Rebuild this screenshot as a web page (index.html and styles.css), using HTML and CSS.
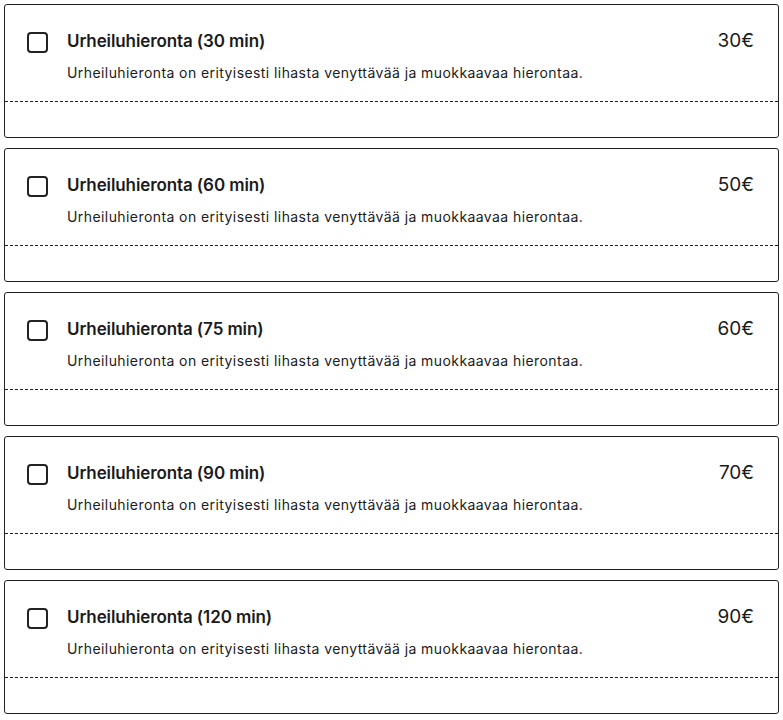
FILE: index.html
```html
<!DOCTYPE html>
<html lang="fi">
<head>
<meta charset="utf-8">
<title>Palvelut</title>
<link rel="stylesheet" href="styles.css">
</head>
<body>
<ul class="services">
  <li class="card">
    <div class="card-main">
      <span class="checkbox"></span>
      <div class="info">
        <div class="title-row">
          <h3 class="title">Urheiluhieronta (30 min)</h3>
          <span class="price">30€</span>
        </div>
        <p class="desc">Urheiluhieronta on erityisesti lihasta venyttävää ja muokkaavaa hierontaa.</p>
      </div>
    </div>
    <div class="card-foot"></div>
  </li>
  <li class="card">
    <div class="card-main">
      <span class="checkbox"></span>
      <div class="info">
        <div class="title-row">
          <h3 class="title">Urheiluhieronta (60 min)</h3>
          <span class="price">50€</span>
        </div>
        <p class="desc">Urheiluhieronta on erityisesti lihasta venyttävää ja muokkaavaa hierontaa.</p>
      </div>
    </div>
    <div class="card-foot"></div>
  </li>
  <li class="card">
    <div class="card-main">
      <span class="checkbox"></span>
      <div class="info">
        <div class="title-row">
          <h3 class="title">Urheiluhieronta (75 min)</h3>
          <span class="price">60€</span>
        </div>
        <p class="desc">Urheiluhieronta on erityisesti lihasta venyttävää ja muokkaavaa hierontaa.</p>
      </div>
    </div>
    <div class="card-foot"></div>
  </li>
  <li class="card">
    <div class="card-main">
      <span class="checkbox"></span>
      <div class="info">
        <div class="title-row">
          <h3 class="title">Urheiluhieronta (90 min)</h3>
          <span class="price">70€</span>
        </div>
        <p class="desc">Urheiluhieronta on erityisesti lihasta venyttävää ja muokkaavaa hierontaa.</p>
      </div>
    </div>
    <div class="card-foot"></div>
  </li>
  <li class="card">
    <div class="card-main">
      <span class="checkbox"></span>
      <div class="info">
        <div class="title-row">
          <h3 class="title">Urheiluhieronta (120 min)</h3>
          <span class="price">90€</span>
        </div>
        <p class="desc">Urheiluhieronta on erityisesti lihasta venyttävää ja muokkaavaa hierontaa.</p>
      </div>
    </div>
    <div class="card-foot"></div>
  </li>
</ul>
</body>
</html>
```
FILE: styles.css
```css
* { box-sizing: border-box; }
html, body { margin: 0; padding: 0; background: #fff; }
body {
  font-family: "Inter", "Noto Sans", "Liberation Sans", sans-serif;
  color: #1b1b1b;
}
.services {
  list-style: none;
  margin: 0;
  padding: 4px 4px 0 4px;
  display: flex;
  flex-direction: column;
  gap: 10px;
}
.card {
  border: 1px solid #222;
  border-radius: 3px;
  height: 134px;
  display: flex;
  flex-direction: column;
}
.card-main {
  flex: 1;
  display: flex;
  align-items: flex-start;
  gap: 19px;
  padding: 25px 24px 0 22px;
  border-bottom: 1px dashed #222;
}
.checkbox {
  flex: none;
  width: 21px;
  height: 21px;
  margin-top: 2px;
  border: 2px solid #222;
  border-radius: 4px;
}
.info { flex: 1; }
.title-row {
  display: flex;
  justify-content: space-between;
  align-items: baseline;
}
.title {
  margin: 0;
  font-size: 17px;
  font-weight: 600;
  line-height: 22px;
  letter-spacing: -0.1px;
}
.price {
  font-size: 19px;
  font-weight: 400;
  line-height: 22px;
}
.desc {
  margin: 12px 0 0;
  font-size: 14px;
  line-height: 18px;
  letter-spacing: 0.42px;
}
.card-foot { height: 35px; flex: none; }
```
